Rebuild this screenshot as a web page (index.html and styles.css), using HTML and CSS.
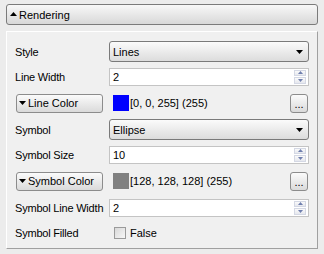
FILE: index.html
```html
<!DOCTYPE html>
<html>

<head>
    <link rel="stylesheet" href="styles.css">
</head>

<body>
    <div class="header">
        <svg class="tri" width="7" height="4" viewBox="0 0 7 4"><path d="M3.5 0 L7 4 L0 4 Z" fill="#000"/></svg>
        <span>Rendering</span>
    </div>
    <div class="panel">
        <div class="row">
            <div class="label">Style</div>
            <div class="value">
                <div class="combo">
                    <span>Lines</span>
                    <svg class="combo-arrow" width="7" height="4" viewBox="0 0 7 4"><path d="M0 0 L7 0 L3.5 4 Z" fill="#000"/></svg>
                </div>
            </div>
        </div>
        <div class="row">
            <div class="label">Line Width</div>
            <div class="value">
                <div class="spin">
                    <span>2</span>
                    <div class="spin-btns">
                        <div class="spin-btn"><svg width="5" height="3" viewBox="0 0 5 3"><path d="M2.5 0 L5 3 L0 3 Z" fill="#6f7fae"/></svg></div>
                        <div class="spin-btn"><svg width="5" height="3" viewBox="0 0 5 3"><path d="M0 0 L5 0 L2.5 3 Z" fill="#6f7fae"/></svg></div>
                    </div>
                </div>
            </div>
        </div>
        <div class="row row-color">
            <div class="label">
                <div class="color-btn">
                    <svg class="tri" width="7" height="4" viewBox="0 0 7 4"><path d="M0 0 L7 0 L3.5 4 Z" fill="#000"/></svg>
                    <span>Line Color</span>
                </div>
            </div>
            <div class="value">
                <div class="swatch" style="background: #0000ff;"></div>
                <span>[0, 0, 255] (255)</span>
                <div class="dots">...</div>
            </div>
        </div>
        <div class="row">
            <div class="label">Symbol</div>
            <div class="value">
                <div class="combo">
                    <span>Ellipse</span>
                    <svg class="combo-arrow" width="7" height="4" viewBox="0 0 7 4"><path d="M0 0 L7 0 L3.5 4 Z" fill="#000"/></svg>
                </div>
            </div>
        </div>
        <div class="row">
            <div class="label">Symbol Size</div>
            <div class="value">
                <div class="spin">
                    <span>10</span>
                    <div class="spin-btns">
                        <div class="spin-btn"><svg width="5" height="3" viewBox="0 0 5 3"><path d="M2.5 0 L5 3 L0 3 Z" fill="#6f7fae"/></svg></div>
                        <div class="spin-btn"><svg width="5" height="3" viewBox="0 0 5 3"><path d="M0 0 L5 0 L2.5 3 Z" fill="#6f7fae"/></svg></div>
                    </div>
                </div>
            </div>
        </div>
        <div class="row row-color">
            <div class="label">
                <div class="color-btn">
                    <svg class="tri" width="7" height="4" viewBox="0 0 7 4"><path d="M0 0 L7 0 L3.5 4 Z" fill="#000"/></svg>
                    <span>Symbol Color</span>
                </div>
            </div>
            <div class="value">
                <div class="swatch" style="background: #808080;"></div>
                <span>[128, 128, 128] (255)</span>
                <div class="dots">...</div>
            </div>
        </div>
        <div class="row">
            <div class="label">Symbol Line Width</div>
            <div class="value">
                <div class="spin">
                    <span>2</span>
                    <div class="spin-btns">
                        <div class="spin-btn"><svg width="5" height="3" viewBox="0 0 5 3"><path d="M2.5 0 L5 3 L0 3 Z" fill="#6f7fae"/></svg></div>
                        <div class="spin-btn"><svg width="5" height="3" viewBox="0 0 5 3"><path d="M0 0 L5 0 L2.5 3 Z" fill="#6f7fae"/></svg></div>
                    </div>
                </div>
            </div>
        </div>
        <div class="row">
            <div class="label">Symbol Filled</div>
            <div class="value">
                <div class="checkbox"></div>
                <span class="check-text">False</span>
            </div>
        </div>
    </div>
</body>

</html>
```

FILE: styles.css
```css
* {
    box-sizing: border-box;
}

body {
    margin: 0;
    background-color: #ececec;
    font-family: "Liberation Sans", Arial, sans-serif;
    font-size: 11px;
    color: #000;
}

.header {
    margin: 4px 6px 0;
    height: 21px;
    border: 1px solid #7b7b7b;
    border-radius: 3px;
    background: linear-gradient(#f8f8f8, #d8d8d8);
    display: flex;
    align-items: center;
    padding-left: 3px;
}

.header .tri {
    margin-right: 2px;
    margin-top: -1px;
}

.panel {
    margin: 6px 6px 0;
    height: 218px;
    border: 1px solid;
    border-color: #ffffff #a0a0a0 #a0a0a0 #ffffff;
    padding: 7px 8px 0;
    background-color: #f0f0f0;
}

.row {
    display: flex;
    align-items: center;
    height: 25px;
}

.row-color {
    height: 28px;
}

.label {
    width: 94px;
    flex-shrink: 0;
    white-space: nowrap;
    letter-spacing: -0.2px;
}

.value {
    flex: 1;
    display: flex;
    align-items: center;
    white-space: nowrap;
}

.combo {
    width: 100%;
    height: 21px;
    border: 1px solid #7a7a7a;
    border-radius: 3px;
    background: linear-gradient(#fbfbfb, #dcdcdc);
    display: flex;
    align-items: center;
    padding-left: 3px;
}

.combo-arrow {
    margin-left: auto;
    margin-right: 5px;
}

.spin {
    width: 100%;
    height: 18px;
    border: 1px solid #c4c4c4;
    background-color: #fff;
    display: flex;
    align-items: center;
    padding-left: 3px;
}

.spin-btns {
    margin-left: auto;
    margin-right: 2px;
    width: 12px;
    height: 14px;
    display: flex;
    flex-direction: column;
    gap: 1px;
}

.spin-btn {
    flex: 1;
    border: 1px solid #d4d8e4;
    background: linear-gradient(#fafafa, #e6e8ee);
    display: flex;
    align-items: center;
    justify-content: center;
}

.color-btn {
    margin-left: 1px;
    width: 87px;
    height: 19px;
    border: 1px solid #8c8c8c;
    border-radius: 3px;
    background: linear-gradient(#fbfbfb, #dadada);
    display: flex;
    align-items: center;
    padding-left: 2px;
    letter-spacing: 0;
}

.color-btn .tri {
    margin-right: 2px;
}

.swatch {
    width: 16px;
    height: 16px;
    margin-left: 4px;
    margin-right: 1px;
}

.dots {
    margin-left: auto;
    margin-right: 1px;
    width: 18px;
    height: 19px;
    border: 1px solid #8c8c8c;
    border-radius: 3px;
    background: linear-gradient(#fbfbfb, #dadada);
    text-align: center;
    line-height: 18px;
}

.checkbox {
    margin-left: 5px;
    width: 12px;
    height: 12px;
    border: 1px solid #9a9a9a;
    background: linear-gradient(135deg, #d8d8d8, #f6f6f6);
}

.check-text {
    margin-left: 4px;
}
```
